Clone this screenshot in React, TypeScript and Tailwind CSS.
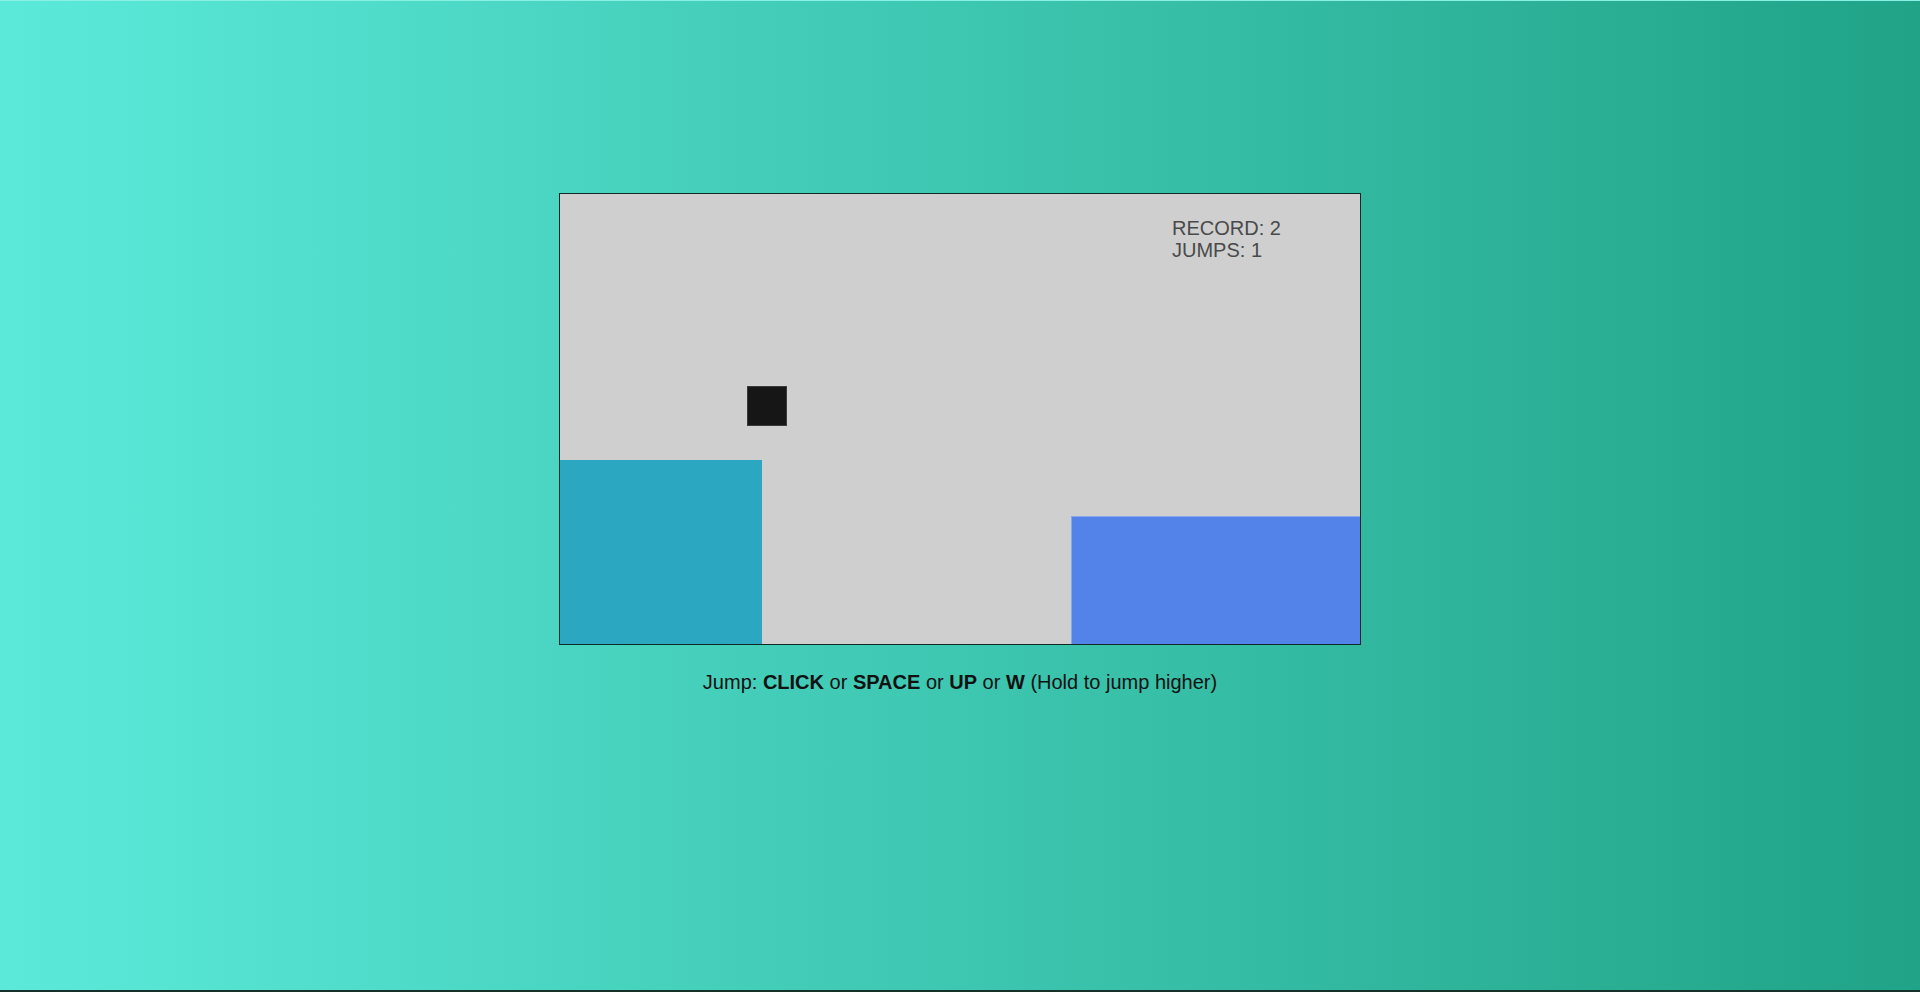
import React from "react";

export default function App() {
  return (
    <div
      className="w-full h-[992px] flex flex-col items-center bg-[linear-gradient(to_right,#5beada,#20a387)] border-t border-t-[#8af0e4] border-b-2 border-b-[#16302a] overflow-hidden"
      style={{ fontFamily: '"Liberation Sans", Arial, sans-serif' }}
    >
      <div className="mt-[192px] w-[802px] h-[452px] border border-[#0d2a24] bg-[#cfcfcf] relative">
        <div className="absolute left-[612px] top-[23px] text-[20px] leading-[22px] text-[#4a4a4a]">
          <div>RECORD: 2</div>
          <div>JUMPS: 1</div>
        </div>
        <div className="absolute left-[187px] top-[192px] w-[40px] h-[40px] bg-[#161616] border border-[#3a3a3a]" />
        <div className="absolute left-0 top-[266px] w-[202px] h-[184px] bg-[#2ca7c2]" />
        <div className="absolute left-[511px] top-[322px] w-[289px] h-[128px] bg-[#5383e8] border-t border-l border-[#8aa8ea]" />
      </div>
      <div className="mt-[22px] text-[20px] leading-[30px] text-[#111]">
        Jump: <b>CLICK</b> or <b>SPACE</b> or <b>UP</b> or <b>W</b> (Hold to jump higher)
      </div>
    </div>
  );
}
